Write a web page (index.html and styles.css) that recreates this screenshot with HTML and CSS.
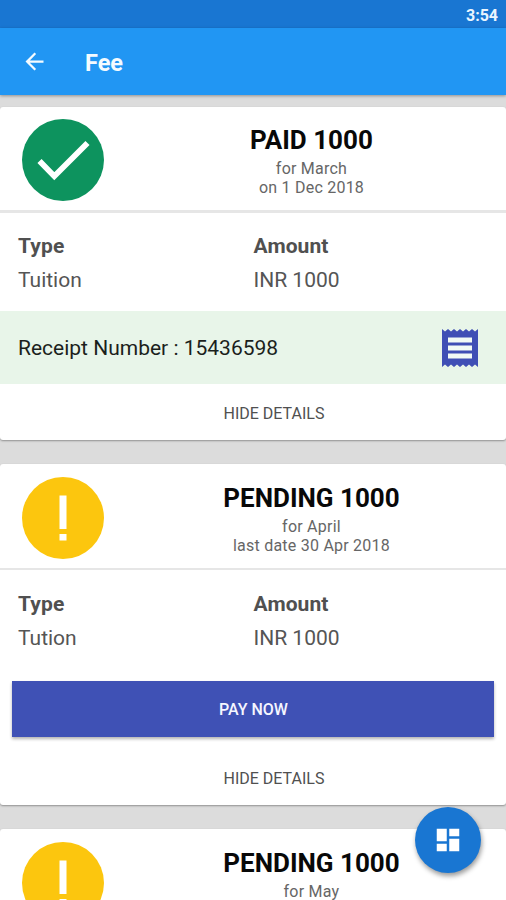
FILE: index.html
```html
<!DOCTYPE html>
<html lang="en">
<head>
<meta charset="utf-8">
<title>Fee</title>
<link rel="stylesheet" href="styles.css">
</head>
<body>
<div class="screen">
  <div class="status">3:54</div>
  <header class="appbar">
    <svg class="back" viewBox="0 0 24 24"><path d="M20 11H7.83l5.59-5.59L12 4l-8 8 8 8 1.41-1.41L7.83 13H20z"/></svg>
    <h1>Fee</h1>
  </header>
  <main>
    <section class="card paid">
      <div class="summary">
        <svg class="state" viewBox="0 0 82 82"><circle cx="41" cy="41" r="41" fill="#0d935e"/><path d="M17.500 42 32.3 57.2 65.5 24" fill="none" stroke="#fff" stroke-width="5.800"/></svg>
        <div class="headline"><h2>PAID 1000</h2><p>for March</p><p>on 1 Dec 2018</p></div>
      </div>
      <div class="details">
        <div><h3>Type</h3><p>Tuition</p></div>
        <div><h3>Amount</h3><p>INR 1000</p></div>
      </div>
      <div class="receipt">
        <span>Receipt Number : 15436598</span>
        <svg class="bill" viewBox="0 0 36 38"><path fill="#3f4fb5" d="M0 0 3 2.500 6 0 9 2.500 12 0 15 2.500 18 0 21 2.500 24 0 27 2.500 30 0 33 2.500 36 0V38L33 35.500 30 38 27 35.500 24 38 21 35.500 18 38 15 35.500 12 38 9 35.500 6 38 3 35.500 0 38Z"/><path fill="#f1faf5" d="M6 8.5h24v5H6zM6 16.5h24v5H6zM6 24.5h24v5H6z"/></svg>
      </div>
      <button class="toggle">HIDE DETAILS</button>
    </section>
    <section class="card pending">
      <div class="summary">
        <svg class="state" viewBox="0 0 82 82"><circle cx="41" cy="41" r="41" fill="#fcc60e"/><path d="M37.5 18.5h7v33.500h-7zM37.500 57h7v6.500h-7z" fill="#fff"/></svg>
        <div class="headline"><h2>PENDING 1000</h2><p>for April</p><p>last date 30 Apr 2018</p></div>
      </div>
      <div class="details">
        <div><h3>Type</h3><p>Tution</p></div>
        <div><h3>Amount</h3><p>INR 1000</p></div>
      </div>
      <button class="pay">PAY NOW</button>
      <button class="toggle">HIDE DETAILS</button>
    </section>
    <section class="card pending">
      <div class="summary">
        <svg class="state" viewBox="0 0 82 82"><circle cx="41" cy="41" r="41" fill="#fcc60e"/><path d="M37.5 18.5h7v33.500h-7zM37.500 57h7v6.500h-7z" fill="#fff"/></svg>
        <div class="headline"><h2>PENDING 1000</h2><p>for May</p></div>
      </div>
    </section>
  </main>
  <button class="fab" aria-label="Dashboard"><svg viewBox="0 0 24 24"><path d="M3 13h8V3H3v10zm0 8h8v-6H3v6zm10 0h8V11h-8v10zm0-18v6h8V3h-8z"/></svg></button>
</div>
</body>
</html>
```
FILE: styles.css
```css
* { box-sizing: border-box; }
body { margin: 0; font-family: Roboto, "Liberation Sans", sans-serif; }
h1, h2, h3, p { margin: 0; }
button { border: 0; padding: 0; font-family: inherit; }
.screen {
  position: relative;
  height: 900px;
  overflow: hidden;
  background: #dcdcdc;
  display: flex;
  flex-direction: column;
}
.status {
  flex: none;
  height: 28px;
  padding-right: 8px;
  background: #1976d2;
  color: #eaf5ff;
  font-size: 16px;
  font-weight: 700;
  line-height: 31px;
  text-align: right;
}
.appbar {
  flex: none;
  height: 67px;
  padding-left: 21px;
  background: #2196f3;
  display: flex;
  align-items: center;
  box-shadow: 0 1px 3px rgba(0, 0, 0, .35);
  color: #f4fbff;
}
.back { width: 27px; height: 27px; fill: currentColor; }
.appbar h1 { margin-left: 37px; padding-top: 3px; font-size: 23.500px; font-weight: 700; line-height: 30px; }
main {
  flex: none;
  padding-top: 12px;
  display: flex;
  flex-direction: column;
  gap: 24px;
}
.card {
  background: #fff;
  border-radius: 3px;
  box-shadow: 0 1px 2px rgba(0, 0, 0, .35);
  display: flex;
  flex-direction: column;
}
.paid { height: 333.400px; }
.pending { height: 341px; }
.summary {
  height: 106px;
  padding-left: 22px;
  display: flex;
  border-bottom: 3px solid #e6e6e6;
}
.pending .summary { border-bottom-width: 2px; height: 105.500px; }
.state { flex: none; width: 82px; height: 82px; margin-top: 12px; }
.headline { flex: none; width: 415px; margin-top: 17px; text-align: center; }
.pending .state { margin-top: 12.600px; }
.pending .headline { margin-top: 17.600px; }
.headline h2 { font-size: 26px; font-weight: 700; line-height: 32px; color: #080808; }
.headline p { font-size: 16px; line-height: 19px; letter-spacing: .23px; color: #666; position: relative; top: 3px; }
.details {
  height: 98px;
  padding: 16px 18px 0;
  display: grid;
  grid-template-columns: 235.500px 1fr;
}
.pending .details { height: 98.500px; padding-top: 17px; }
.details h3 { font-size: 21px; font-weight: 700; line-height: 34px; letter-spacing: .1px; color: #505050; }
.details p { font-size: 21px; line-height: 34px; color: #555; }
.receipt {
  height: 73px;
  padding: 0 28px 0 18px;
  background: #e8f5e9;
  display: flex;
  justify-content: space-between;
  align-items: center;
  font-size: 21px;
  color: #1b1f1c;
}
.bill { width: 36px; height: 38px; }
.toggle {
  flex: 1;
  background: transparent;
  color: #505050;
  font-size: 16px;
  padding-top: 2px;
  padding-left: 42px;
  text-align: center;
}
.pay {
  height: 56px;
  margin: 13px 12px 12px;
  background: #3f51b5;
  color: #f5f6ff;
  font-size: 16px;
  font-weight: 500;
  padding-left: 1px;
  box-shadow: 0 2px 3px rgba(0, 0, 0, .3);
}
.fab {
  position: absolute;
  left: 415px;
  top: 807px;
  width: 66px;
  height: 66px;
  border-radius: 50%;
  background: #1976d2;
  box-shadow: 1px 3px 5px rgba(0, 0, 0, .4);
  display: flex;
  align-items: center;
  justify-content: center;
}
.fab svg { width: 30px; height: 30px; fill: #fff; }
```
